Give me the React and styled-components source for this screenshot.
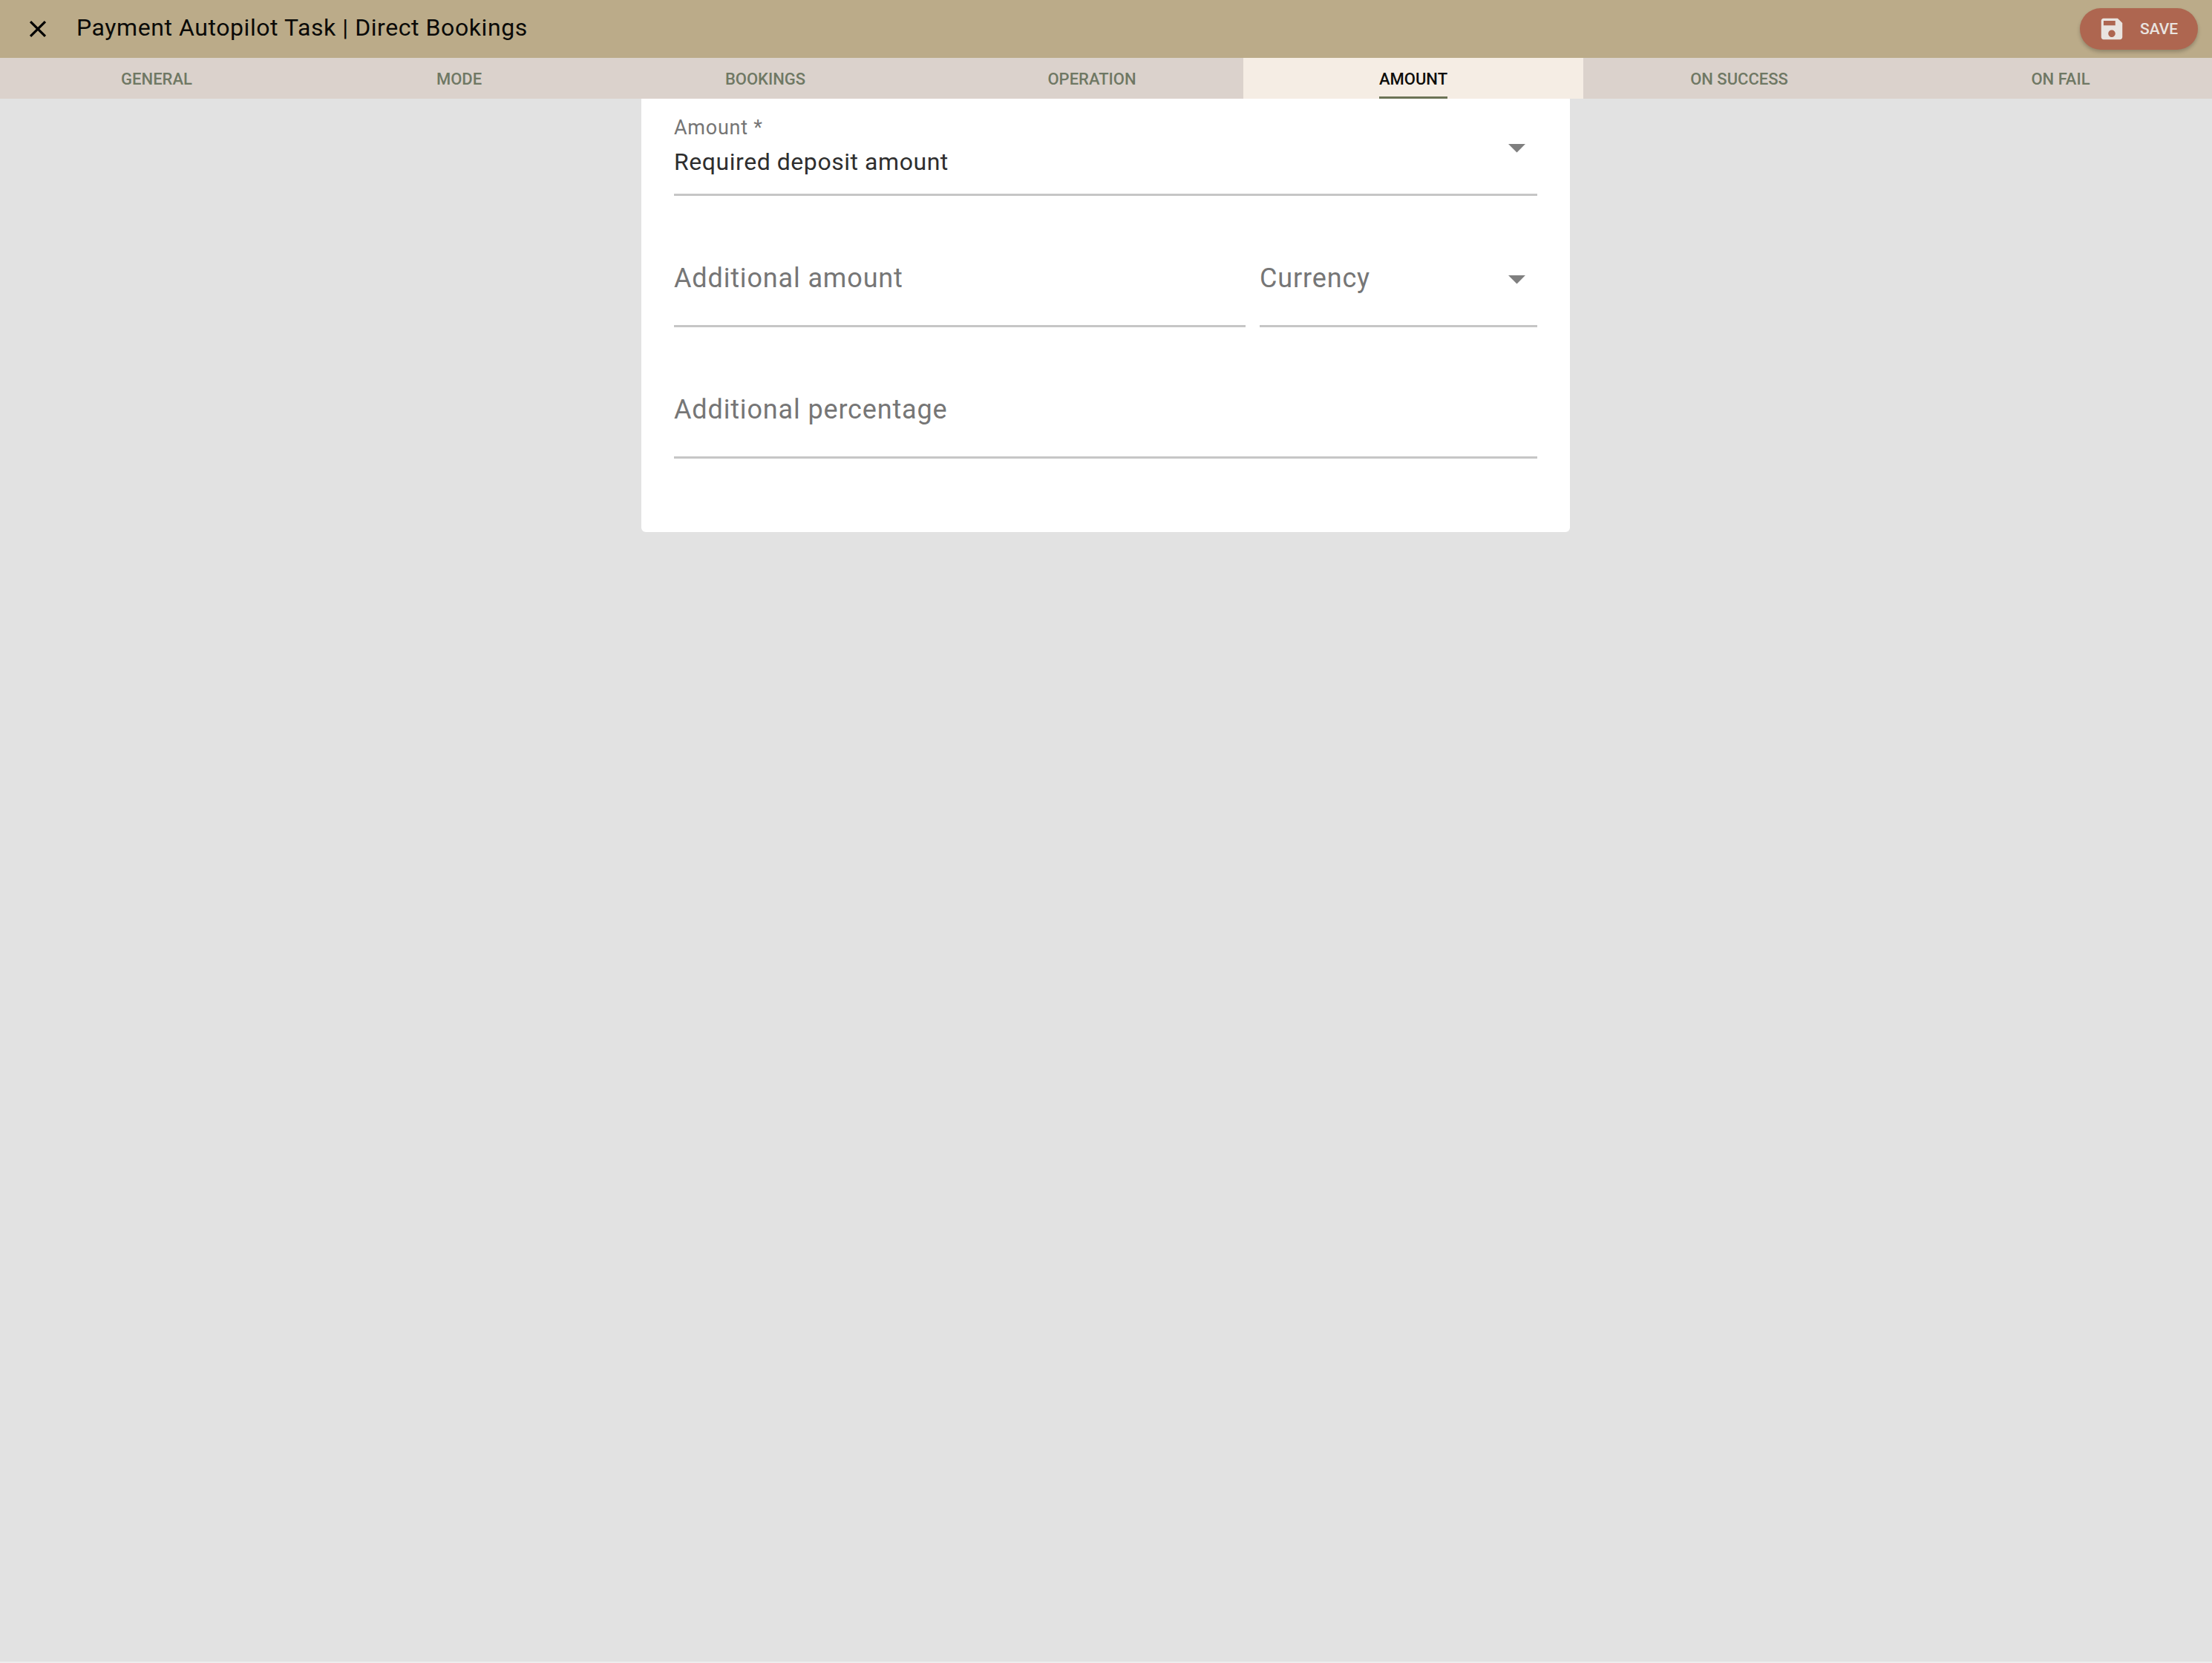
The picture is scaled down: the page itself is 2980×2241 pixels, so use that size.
import React from 'react';
import styled, { createGlobalStyle } from 'styled-components';

const GlobalStyle = createGlobalStyle`
  html, body {
    margin: 0;
    padding: 0;
    background: #ededed;
  }
  * {
    box-sizing: border-box;
  }
`;

const Page = styled.div`
  height: 2239px;
  background: #e2e2e2;
  font-family: Roboto, 'Liberation Sans', sans-serif;
`;

const TopBar = styled.header`
  height: 78px;
  padding: 0 19px 0 32px;
  display: flex;
  align-items: center;
  background: #bbab89;
`;

const CloseButton = styled.button`
  width: 38px;
  height: 38px;
  padding: 0;
  margin-right: 33px;
  border: 0;
  background: none;
  color: #000;
  svg {
    display: block;
  }
`;

const Title = styled.h1`
  flex: 1;
  margin: 0 0 4px;
  font-size: 32px;
  font-weight: 400;
  letter-spacing: 0.57px;
  color: #0a0a08;
`;

const SaveButton = styled.button`
  width: 159px;
  height: 56px;
  padding: 0 0 0 24px;
  display: flex;
  align-items: center;
  gap: 19px;
  border: 0;
  border-radius: 28px;
  background: #ae6650;
  color: #e9e4e0;
  font-family: inherit;
  font-size: 21px;
  font-weight: 500;
  box-shadow: 0 3px 5px rgba(0, 0, 0, 0.22);
  svg {
    display: block;
    flex-shrink: 0;
  }
`;

const TabBar = styled.nav`
  height: 55px;
  display: flex;
  background: #dbd2cc;
`;

const Tab = styled.div`
  position: relative;
  flex: 0 0 ${(p) => p.$width}px;
  padding-left: ${(p) => p.$pad || 0}px;
  display: flex;
  align-items: center;
  justify-content: center;
  background: ${(p) => (p.$active ? '#f5ede4' : 'transparent')};
  color: ${(p) => (p.$active ? '#0d0d0b' : '#6f7864')};
  font-size: 22px;
  font-weight: 500;
`;

const TabLabel = styled.span`
  position: relative;
  display: block;
  height: 55px;
  line-height: 57px;
`;

const Indicator = styled.span`
  position: absolute;
  left: 0;
  right: 0;
  bottom: 0;
  height: 3px;
  background: #6b7355;
`;

const Card = styled.main`
  width: 1251px;
  height: 584px;
  margin-left: 864px;
  padding: 0 44px;
  background: #fff;
  border-radius: 0 0 6px 6px;
`;

const FieldRow = styled.div`
  display: flex;
  gap: 19px;
`;

const Field = styled.div`
  flex: ${(p) => (p.$width ? `0 0 ${p.$width}px` : '1')};
  height: ${(p) => (p.$first ? 131 : 177)}px;
  display: flex;
  justify-content: space-between;
  align-items: flex-end;
  border-bottom: 3px solid #c6c6c6;
`;

const ValueStack = styled.div`
  padding-bottom: 25px;
  display: flex;
  flex-direction: column;
`;

const FloatLabel = styled.label`
  font-size: 27px;
  line-height: 30px;
  letter-spacing: 0.75px;
  color: #757575;
`;

const Value = styled.div`
  margin-top: 13px;
  font-size: 32px;
  line-height: 36px;
  letter-spacing: 0.55px;
  color: #2e2e2e;
`;

const Placeholder = styled.div`
  padding-bottom: 43px;
  font-size: 36px;
  line-height: 40px;
  letter-spacing: 0.85px;
  color: #767676;
`;

const Arrow = styled.svg`
  display: block;
  margin: 0 0 ${(p) => p.$bottom}px 0;
  fill: #7f7f7f;
`;

const tabs = [
  { label: 'GENERAL', width: 422 },
  { label: 'MODE', width: 393 },
  { label: 'BOOKINGS', width: 432 },
  { label: 'OPERATION', width: 428, pad: 20 },
  { label: 'AMOUNT', width: 458, active: true },
  { label: 'ON SUCCESS', width: 420 },
  { label: 'ON FAIL', width: 427, pad: 19 },
];

const DropArrow = ({ bottom }) => (
  <Arrow $bottom={bottom} width="55" height="55" viewBox="0 0 24 24">
    <path d="M7 10l5 5 5-5z" />
  </Arrow>
);

export default function App() {
  return (
    <Page>
      <GlobalStyle />
      <TopBar>
        <CloseButton aria-label="Close">
          <svg width="38" height="38" viewBox="0 0 24 24" fill="currentColor">
            <path d="M19 6.41 17.59 5 12 10.59 6.41 5 5 6.41 10.59 12 5 17.59 6.41 19 12 13.41 17.59 19 19 17.59 13.41 12z" />
          </svg>
        </CloseButton>
        <Title>Payment Autopilot Task | Direct Bookings</Title>
        <SaveButton>
          <svg width="38" height="38" viewBox="0 0 24 24" fill="currentColor">
            <path d="M17 3H5c-1.11 0-2 .9-2 2v14c0 1.1.89 2 2 2h14c1.1 0 2-.9 2-2V7l-4-4zm-5 16c-1.66 0-3-1.34-3-3s1.34-3 3-3 3 1.34 3 3-1.34 3-3 3zm3-10H5V5h10v4z" />
          </svg>
          SAVE
        </SaveButton>
      </TopBar>
      <TabBar>
        {tabs.map((tab) => (
          <Tab key={tab.label} $width={tab.width} $pad={tab.pad} $active={tab.active}>
            <TabLabel>
              {tab.label}
              {tab.active && <Indicator />}
            </TabLabel>
          </Tab>
        ))}
      </TabBar>
      <Card>
        <Field $first>
          <ValueStack>
            <FloatLabel>Amount *</FloatLabel>
            <Value>Required deposit amount</Value>
          </ValueStack>
          <DropArrow bottom={35} />
        </Field>
        <FieldRow>
          <Field>
            <Placeholder>Additional amount</Placeholder>
          </Field>
          <Field $width={374}>
            <Placeholder>Currency</Placeholder>
            <DropArrow bottom={35} />
          </Field>
        </FieldRow>
        <Field>
          <Placeholder>Additional percentage</Placeholder>
        </Field>
      </Card>
    </Page>
  );
}
